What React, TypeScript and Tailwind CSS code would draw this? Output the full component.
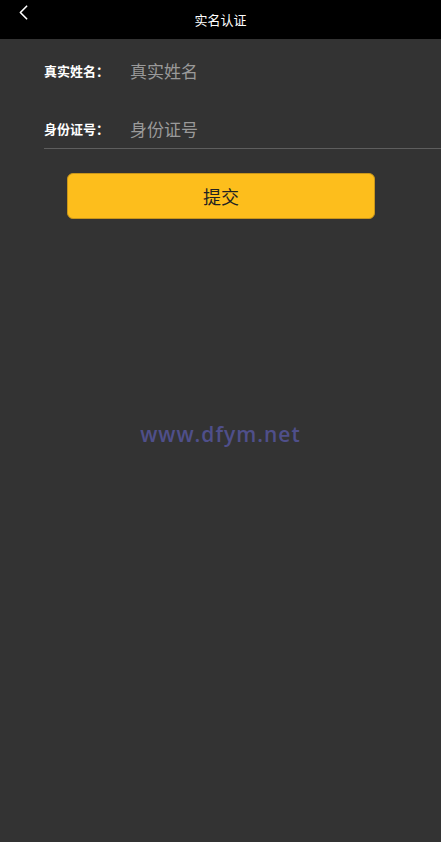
import { ChevronLeft } from "lucide-react";

const font = { fontFamily: '"Noto Sans CJK SC", "Liberation Sans", sans-serif' };

const Field = ({ label, placeholder, line }: { label: string; placeholder: string; line?: boolean }) => (
  <div className={`flex items-center ml-[44px] h-[40px] ${line ? "border-b border-[#5e5e5e]" : ""}`}>
    <span className="w-[86px] text-[13px] font-bold text-white">{label}</span>
    <input
      placeholder={placeholder}
      className="flex-1 bg-transparent outline-none text-[17px] text-[#ccc] placeholder:text-[#9a9a9a]"
      style={font}
    />
  </div>
);

export default function App() {
  return (
    <div className="min-h-[842px] w-full bg-[#333333]" style={font}>
      <header className="relative h-[39px] bg-black flex items-center justify-center">
        <ChevronLeft className="absolute left-[11px] top-[0px] w-[25px] h-[25px] text-white" strokeWidth={1.6} />
        <h1 className="text-[13px] text-white">实名认证</h1>
      </header>
      <div className="pt-[12px]">
        <Field label="真实姓名：" placeholder="真实姓名" />
        <div className="h-[18px]" />
        <Field label="身份证号：" placeholder="身份证号" line />
      </div>
      <div className="px-[67px] pt-[24px] pr-[66px]">
        <button className="w-full h-[46px] rounded-[6px] bg-[#fdbe1c] border border-[#c9961b] text-[18px] text-[#222]">
          提交
        </button>
      </div>
      <div className="mt-[200px] text-center text-[21px] font-semibold tracking-[1px] text-[#4f4f8a]" style={{ fontFamily: '"Open Sans", "Liberation Sans", sans-serif' }}>
        www.dfym.net
      </div>
    </div>
  );
}
